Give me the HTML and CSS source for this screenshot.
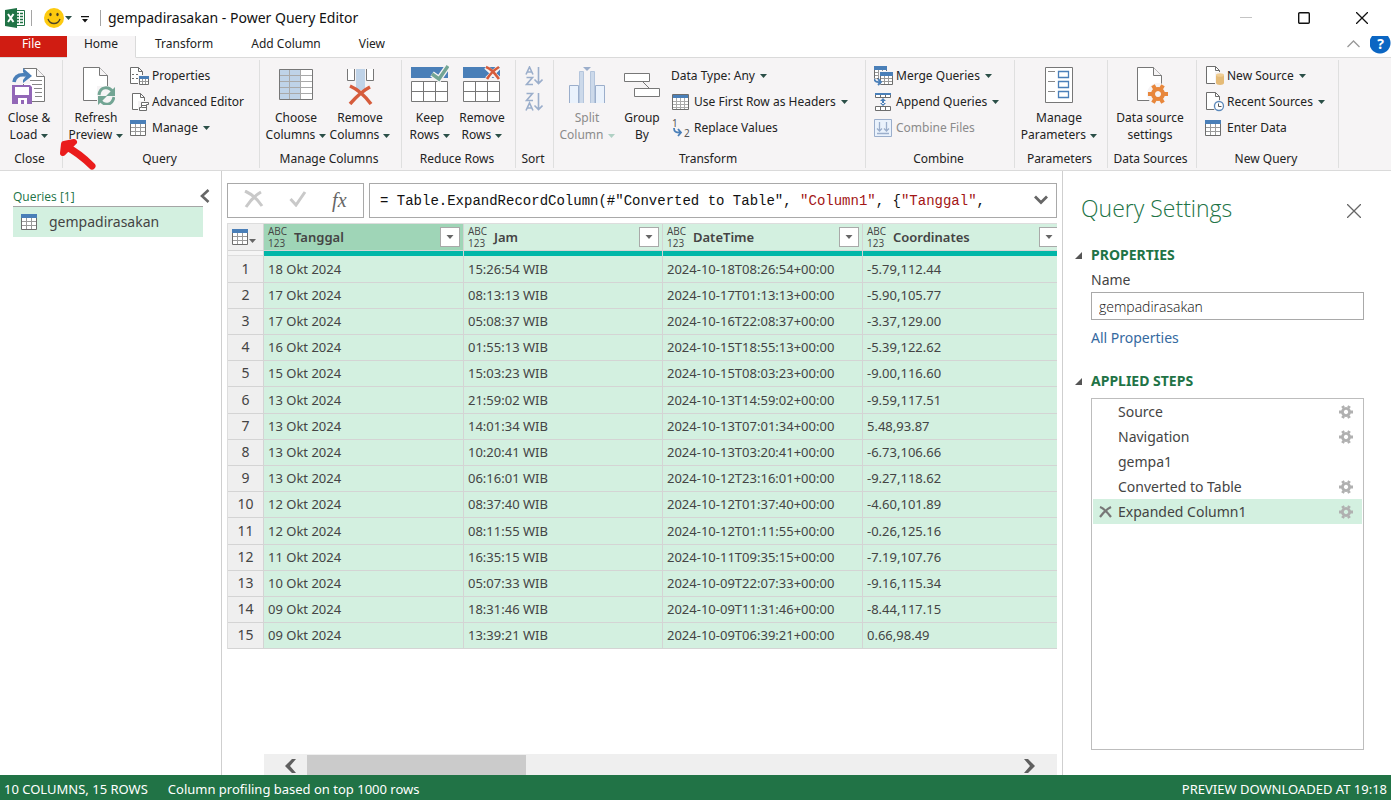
FILE: index.html
```
<!DOCTYPE html>
<html lang="en">
<head>
<meta charset="utf-8">
<title>gempadirasakan - Power Query Editor</title>
<link rel="stylesheet" href="styles.css">
</head>
<body>
<svg class="defs" aria-hidden="true">
  <symbol id="table" viewBox="0 0 16 16"><path fill="#fff" stroke="#6d6d6d" d="M.5 2.500h15v13H.5z"/><path fill="none" stroke="#9a9a9a" d="M1 7.500h14M1 11.500h14M5.500 4v11M10.500 4v11"/><path fill="#4a7fb8" d="M0 0h16v4H0z"/></symbol>
  <symbol id="gear" viewBox="0 0 20 20"><path fill="none" stroke="currentColor" stroke-width="4" d="M10 5a5 5 0 1 0 .01 0z"/><path stroke="currentColor" stroke-width="4" d="M0 10h4M16 10h4M5 1.300l2 3.500M15 1.300l-2 3.500M5 18.700l2-3.500M15 18.700l-2-3.500"/></symbol>
  <symbol id="step-gear" viewBox="0 0 14 14"><path fill="none" stroke="currentColor" stroke-width="2.800" d="M7 3.400a3.600 3.600 0 1 0 .01 0z"/><path stroke="currentColor" stroke-width="3" d="M0 7h3M11 7h3M3.500 1l1.200 2M10.500 1L9.300 3M3.500 13l1.200-2M10.500 13l-1.200-2"/></symbol>
  <symbol id="caret" viewBox="0 0 7 4"><path fill="currentColor" d="M0 0h7L3.500 4z"/></symbol>
</svg>

<div class="app">
  <header class="titlebar">
    <svg class="logo" width="20" height="20" viewBox="0 0 20 20"><path fill="#fff" stroke="#217346" d="M9 2.500h10.500v15H9z"/><path stroke="#217346" stroke-width="1.300" d="M11 5.500h3M15 5.500h3M11 8.500h3M15 8.500h3M11 11.500h3M15 11.500h3M11 14.500h3M15 14.500h3"/><path fill="#217346" d="M0 2l12-2v20L0 18z"/><path stroke="#fff" stroke-width="2" d="M3 6l5.500 8M8.500 6L3 14"/></svg>
    <span class="sep"></span>
    <button class="smile" aria-label="Send feedback"><svg width="20" height="20" viewBox="0 0 20 20"><circle cx="10" cy="10" r="10" fill="#fdca0f"/><ellipse cx="6.500" cy="6.500" rx="1.200" ry="1.700" fill="#4c4326"/><ellipse cx="13.500" cy="6.500" rx="1.200" ry="1.700" fill="#4c4326"/><path d="M4 11c2 6 10 6 12 0" fill="none" stroke="#4c4326" stroke-width="1.300"/></svg><svg class="caret"><use href="#caret"/></svg></button>
    <button class="customize" aria-label="Customize toolbar"><svg width="8" height="7" viewBox="0 0 8 7"><path fill="#111" d="M0 0h8v1.200H0zM1 3h6L4 6.500z"/></svg></button>
    <span class="sep"></span>
    <h1>gempadirasakan - Power Query Editor</h1>
    <div class="window-controls">
      <button aria-label="Minimize"><svg width="12" height="12"><path stroke="#c4c4c4" d="M0 5.500h12"/></svg></button>
      <button aria-label="Maximize"><svg width="12" height="12"><rect x=".7" y=".7" width="10.600" height="10.600" rx="1" fill="none" stroke="#111" stroke-width="1.400"/></svg></button>
      <button aria-label="Close"><svg width="12" height="12"><path stroke="#111" stroke-width="1.300" d="M0 0l12 12M12 0L0 12"/></svg></button>
    </div>
  </header>

  <nav class="tabs">
    <button class="tab file">File</button>
    <button class="tab home">Home</button>
    <button class="tab">Transform</button>
    <button class="tab">Add Column</button>
    <button class="tab">View</button>
    <span class="tab-fill"></span>
    <button class="collapse" aria-label="Collapse ribbon"><svg width="13" height="8"><path fill="none" stroke="#999" stroke-width="1.300" d="M.5 7l6-6 6 6"/></svg></button>
    <button class="help" aria-label="Help">?</button>
  </nav>

  <div class="ribbon">
    <section class="group g-close">
      <div class="body">
        <button class="big"><svg width="38" height="40" viewBox="0 0 38 40"><path fill="#fff" stroke="#777" d="M13.500 3.500h13l8 8v25h-21z"/><path fill="#f6f4f5" stroke="#777" d="M26.500 3.500v8h8"/><path stroke="#888" d="M20 15.500h12M22 19.500h10M24 23.500h8M25 27.500h7M25 31.500h7"/><path fill="#f6f4f5" d="M2 7h18v12H2z"/><path fill="none" stroke="#4a7fb8" stroke-width="3.600" d="M4 17c1-6 5-8 12-7"/><path fill="#4a7fb8" d="M13 3l9 8-9 7v-3l3-4-3-4z"/><path fill="#9267b7" d="M2 20h18l2 2v17H2z"/><path fill="#fff" d="M5 22h14v8H5zM8 33h9v6H8z"/><path fill="#9267b7" d="M11 35h3v4h-3z"/></svg><span>Close &amp;<br>Load <svg class="caret"><use href="#caret"/></svg></span></button>
      </div>
      <h2>Close</h2>
    </section>

    <section class="group g-query">
      <div class="body">
        <button class="big w60"><svg width="38" height="40" viewBox="0 0 38 40"><path fill="#fff" stroke="#777" d="M6.500 2.500h16l8 8v25h-24z"/><path fill="#f6f4f5" stroke="#777" d="M22.500 2.500v8h8"/><path fill="#f6f4f5" d="M20 21h18v19H20z"/><path fill="none" stroke="#73a594" stroke-width="3" d="M22 30c1-9 10-9 14-3M37 32c-2 9-10 9-14 3"/><path fill="#73a594" d="M38 22v9h-9zM21 40v-9h9z"/></svg><span>Refresh<br>Preview <svg class="caret"><use href="#caret"/></svg></span></button>
        <div class="rows">
          <button class="small"><svg class="ic" viewBox="0 0 20 20"><path fill="#fff" stroke="#6d6d6d" d="M.5 1.500h8l4 4v12H.5z"/><path fill="none" stroke="#6d6d6d" d="M8.500 1.500v4h4M2 8.500h2M6 8.500h2M2 12.500h2M6 12.500h2"/><path fill="#f6f4f5" d="M8 9h12v11H8z"/><path fill="#fff" stroke="#6d6d6d" d="M9.500 10.500h9v8h-9z"/><path stroke="#999" d="M10 15.500h8M12.500 13v5M15.500 13v5"/><path fill="#4a7fb8" d="M9 10h10v3H9z"/></svg>Properties</button>
          <button class="small"><svg class="ic" viewBox="0 0 20 20"><path fill="#fff" stroke="#6d6d6d" d="M2.500 1.500h8l4 4v12h-12z"/><path fill="none" stroke="#6d6d6d" d="M10.500 1.500v4h4"/><path fill="#f6f4f5" d="M8 9h12v11H8z"/><path fill="#fff" stroke="#6d6d6d" d="M11.500 10.500h7v2h-2v6h-7v-3h2zM12 13.500h4M12 15.500h4"/></svg>Advanced Editor</button>
          <button class="small"><svg class="ic t"><use href="#table"/></svg>Manage <svg class="caret"><use href="#caret"/></svg></button>
        </div>
      </div>
      <h2>Query</h2>
    </section>

    <section class="group g-columns">
      <div class="body">
        <button class="big w64"><svg width="38" height="40" viewBox="0 0 38 40"><path fill="#fff" d="M2 4h33v30H2z"/><path fill="#bfd3e8" d="M2 4h22v30H2z"/><path fill="none" stroke="#a9a9a9" d="M2 10.500h33M2 16.500h33M2 22.500h33M2 28.500h33M12.500 4v30M23.500 4v30"/><path fill="none" stroke="#777" d="M2.500 4.500h33v30h-33z"/></svg><span>Choose<br>Columns <svg class="caret"><use href="#caret"/></svg></span></button>
        <button class="big w64"><svg width="38" height="40" viewBox="0 0 38 40"><path fill="#bfd3e8" d="M15 4h9v21h-9z"/><path fill="#fff" d="M7 4h6v11H7zM26 4h7v11h-7z"/><path fill="none" stroke="#777" d="M6.500 4v11.500h7V4M25.500 4v11.500h7V4"/><path fill="none" stroke="#d65c3c" stroke-width="3.500" d="M9 21c7 3 15 10 21 18M29 22c-8 4-14 10-20 17"/></svg><span>Remove<br>Columns <svg class="caret"><use href="#caret"/></svg></span></button>
      </div>
      <h2>Manage Columns</h2>
    </section>

    <section class="group g-reduce">
      <div class="body">
        <button class="big w52"><svg width="38" height="40" viewBox="0 0 38 40"><path fill="#4a7fb8" d="M0 2h37v11H0z"/><path fill="#fff" stroke="#777" d="M.5 16.500h36v20H.5z"/><path stroke="#777" d="M0 26.500h37M12.500 17v19M24.500 17v19"/><path fill="none" stroke="#f6f4f5" stroke-width="6" d="M21 9l7 5 9-13"/><path fill="none" stroke="#73a594" stroke-width="3.400" d="M21 9l7 5 9-13"/></svg><span>Keep<br>Rows <svg class="caret"><use href="#caret"/></svg></span></button>
        <button class="big w52"><svg width="38" height="40" viewBox="0 0 38 40"><path fill="#4a7fb8" d="M0 2h37v11H0z"/><path fill="#fff" stroke="#777" d="M.5 16.500h36v20H.5z"/><path stroke="#777" d="M0 26.500h37M12.500 17v19M24.500 17v19"/><path fill="none" stroke="#f6f4f5" stroke-width="5" d="M23 2l13 12M36 2L24 14"/><path fill="none" stroke="#d65c3c" stroke-width="2.600" d="M23 2c6 2 10 8 13 12M36 2c-5 3-9 7-12 12"/></svg><span>Remove<br>Rows <svg class="caret"><use href="#caret"/></svg></span></button>
      </div>
      <h2>Reduce Rows</h2>
    </section>

    <section class="group g-sort">
      <div class="body rows">
        <button class="sort" aria-label="Sort ascending"><svg width="18" height="20" viewBox="0 0 18 20"><g fill="none" stroke="#9baecb" stroke-width="1.600"><path d="M1 8.500L4.500 1 8 8.500M2 6h5M1.500 11.500h6l-6 7h6.500M13.500 1v16M9.500 13.500l4 4 4-4"/></g></svg></button>
        <button class="sort" aria-label="Sort descending"><svg width="18" height="20" viewBox="0 0 18 20"><g fill="none" stroke="#9baecb" stroke-width="1.600"><path d="M1.500 1.500h6l-6 7h6.500M1 18.500L4.500 11 8 18.500M2 16h5M13.500 1v16M9.500 13.500l4 4 4-4"/></g></svg></button>
      </div>
      <h2>Sort</h2>
    </section>

    <section class="group g-transform">
      <div class="body">
        <button class="big w60" disabled><svg width="38" height="40" viewBox="0 0 38 40"><path fill="#eaf2fc" stroke="#9baecb" d="M1.500 38V20.500h9V38M27.500 38V20.500h9V38"/><path fill="#ccd9ea" stroke="#b4c5dc" d="M11.500 38V6.500h4V38M22.500 38V6.500h4V38"/><path fill="#9baecb" d="M15 2h8l-4 4z"/></svg><span>Split<br>Column <svg class="caret"><use href="#caret"/></svg></span></button>
        <button class="big w50"><svg width="38" height="40" viewBox="0 0 38 40"><path fill="#fff" stroke="#777" d="M1.500 8.500h25v8h-25zM11.500 23.500h25v8h-25z"/><path stroke="#777" d="M20 17l6 6"/></svg><span>Group<br>By</span></button>
        <div class="rows">
          <button class="small">Data Type: Any <svg class="caret"><use href="#caret"/></svg></button>
          <button class="small"><svg class="ic t" viewBox="0 0 17 16"><path fill="#fff" stroke="#6d6d6d" d="M.5.5h16v15H.5z"/><path fill="#4a7fb8" d="M1 1h15v3H1z"/><path stroke="#aaa" d="M1 7.500h15M1 10.500h15M1 13.500h15M4.500 4v11M8.500 4v11M12.500 4v11"/></svg>Use First Row as Headers <svg class="caret"><use href="#caret"/></svg></button>
          <button class="small"><svg class="ic wide" viewBox="0 0 20 20"><text class="num" x="0" y="9">1</text><text class="num" x="12" y="19">2</text><path fill="none" stroke="#4a7fb8" stroke-width="1.800" d="M2 10c0 4 2 4.500 6 4.500M6 11l3 3.500-3 3.500"/></svg>Replace Values</button>
        </div>
      </div>
      <h2>Transform</h2>
    </section>

    <section class="group g-combine">
      <div class="body rows">
        <button class="small"><svg class="ic" viewBox="0 0 20 20"><path fill="#fff" stroke="#6d6d6d" d="M.5.5h12v12H.5z"/><path stroke="#999" d="M1 6.500h12M1 9.500h12M4.500 4v8M8.500 4v8"/><path fill="#4a7fb8" d="M0 0h13v4H0z"/><path fill="#f6f4f5" d="M5 5h14v14H5z"/><path fill="#fff" stroke="#6d6d6d" d="M6.500 7.500h12v11h-12z"/><path stroke="#999" d="M7 12.500h11M7 15.500h11M10.500 10v8M14.500 10v8"/><path fill="#4a7fb8" d="M6 6h13v4H6z"/><path fill="none" stroke="#f6f4f5" stroke-width="5" d="M0 13c1 3 3 3.500 6 3"/><path fill="none" stroke="#4a7fb8" stroke-width="1.800" d="M0 13c1 3 3 3.500 6 3M4 13l3 3-3 3"/></svg>Merge Queries <svg class="caret"><use href="#caret"/></svg></button>
        <button class="small"><svg class="ic" viewBox="0 0 20 20"><path fill="#fff" stroke="#6d6d6d" d="M1.500 1.500h15v4h-15zM1.500 14.500h15v4h-15zM6.500 3v2M11.500 3v2M6.500 15v3M11.500 15v3"/><path fill="#4a7fb8" d="M1 1h16v2H1zM9 6l3 3H6zM9 14l3-3H6zM8 8h2v4H8z"/></svg>Append Queries <svg class="caret"><use href="#caret"/></svg></button>
        <button class="small" disabled><svg class="ic" viewBox="0 0 20 20"><path fill="#eaf2fc" stroke="#9baecb" d="M.5 1.500h17v17H.5z"/><path fill="none" stroke="#9baecb" stroke-width="1.300" d="M5.500 4v9M3 10.500l2.500 2.500L8 10.500M12.500 4v9M10 10.500l2.500 2.500 2.500-2.500M3 15.500h12"/></svg>Combine Files</button>
      </div>
      <h2>Combine</h2>
    </section>

    <section class="group g-params">
      <div class="body">
        <button class="big"><svg width="38" height="40" viewBox="0 0 38 40"><path fill="#fff" stroke="#777" d="M5.500 2.500h27v35h-27z"/><path fill="none" stroke="#4a7fb8" stroke-width="1.300" d="M18.500 6.500h10v6h-10zM18.500 16.500h10v6h-10zM18.500 26.500h10v6h-10z"/><path stroke="#888" d="M8 6.500h7M8 16.500h7M8 26.500h7"/></svg><span>Manage<br>Parameters <svg class="caret"><use href="#caret"/></svg></span></button>
      </div>
      <h2>Parameters</h2>
    </section>

    <section class="group g-sources">
      <div class="body">
        <button class="big"><svg width="38" height="40" viewBox="0 0 38 40"><path fill="#fff" stroke="#777" d="M6.500 2.500h16l8 8v25h-24z"/><path fill="#f6f4f5" stroke="#777" d="M22.500 2.500v8h8"/><circle cx="27" cy="29" r="11" fill="#f6f4f5"/><svg class="orange" x="17" y="19" width="20" height="20"><use href="#gear"/></svg></svg><span>Data source<br>settings</span></button>
      </div>
      <h2>Data Sources</h2>
    </section>

    <section class="group g-new">
      <div class="body rows">
        <button class="small"><svg class="ic" viewBox="0 0 20 20"><path fill="#fff" stroke="#6d6d6d" d="M1.500.5h9l4 4v13h-13z"/><path fill="none" stroke="#6d6d6d" d="M10.500.5v4h4"/><path fill="#f6f4f5" d="M10 6h10v13H10z"/><path fill="#e5bb77" d="M11 9v8c0 2.500 8 2.500 8 0V9z"/><ellipse cx="15" cy="9" rx="4" ry="1.800" fill="#efcd94"/></svg>New Source <svg class="caret"><use href="#caret"/></svg></button>
        <button class="small"><svg class="ic" viewBox="0 0 20 20"><path fill="#fff" stroke="#6d6d6d" d="M1.500.5h9l4 4v13h-13z"/><path fill="none" stroke="#6d6d6d" d="M10.500.5v4h4"/><circle cx="14" cy="14" r="6" fill="#f6f4f5"/><circle cx="14" cy="14" r="4.500" fill="#fff" stroke="#5b88ba" stroke-width="1.300"/><path fill="none" stroke="#555" d="M13.500 11.500v3h3"/></svg>Recent Sources <svg class="caret"><use href="#caret"/></svg></button>
        <button class="small"><svg class="ic t"><use href="#table"/></svg>Enter Data</button>
      </div>
      <h2>New Query</h2>
    </section>
    <svg class="pointer" width="42" height="36" viewBox="0 0 42 36" aria-hidden="true"><path fill="none" stroke="#ea1c1c" stroke-width="7" stroke-linecap="round" stroke-linejoin="round" d="M35 29C26 20 18 14 8 9"/><path fill="#ea1c1c" stroke="#ea1c1c" stroke-width="6" stroke-linecap="round" stroke-linejoin="round" d="M17 5L7 7l-1 9z"/></svg>
  </div>

  <main class="workspace">
    <aside class="queries">
      <div class="queries-head"><h3>Queries [1]</h3><button aria-label="Collapse queries"><svg width="10" height="14"><path fill="none" stroke="#666" stroke-width="2.600" d="M8.500 1L2 7l6.500 6"/></svg></button></div>
      <button class="query-item"><svg width="16" height="16"><use href="#table"/></svg>gempadirasakan</button>
    </aside>

    <section class="preview">
      <div class="formula">
        <div class="formula-tools">
          <button aria-label="Cancel"><svg width="20" height="18"><path fill="none" stroke="#c9c9c9" stroke-width="3" d="M1 1c7 3 13 9 17 15M17 2C10 6 6 11 2 17"/></svg></button>
          <button aria-label="Apply"><svg width="18" height="16"><path fill="none" stroke="#c9c9c9" stroke-width="3" d="M1.500 8l5.500 6L16 1"/></svg></button>
          <button class="fx" aria-label="Insert step">fx</button>
        </div>
        <div class="formula-box">
          <div class="formula-text" role="textbox" contenteditable="true" spellcheck="false" aria-label="Formula">= Table.ExpandRecordColumn(#"Converted to Table", <span class="str">"Column1"</span>, {<span class="str">"Tanggal"</span>,</div>
          <button aria-label="Expand formula bar"><svg width="14" height="10"><path fill="none" stroke="#666" stroke-width="2.800" d="M1 1.500l6 6 6-6"/></svg></button>
        </div>
      </div>

      <div class="grid">
        <table>
          <colgroup><col class="c-num"><col><col class="c-time"><col><col></colgroup>
          <thead>
            <tr>
              <th><button class="corner" aria-label="Table menu"><svg width="16" height="16"><use href="#table"/></svg><svg class="caret"><use href="#caret"/></svg></button></th>
              <th class="sel"><div class="head"><span class="type"><span>ABC</span><span>123</span></span>Tanggal<button aria-label="Filter Tanggal"><svg class="caret"><use href="#caret"/></svg></button></div></th>
              <th><div class="head"><span class="type"><span>ABC</span><span>123</span></span>Jam<button aria-label="Filter Jam"><svg class="caret"><use href="#caret"/></svg></button></div></th>
              <th><div class="head"><span class="type"><span>ABC</span><span>123</span></span>DateTime<button aria-label="Filter DateTime"><svg class="caret"><use href="#caret"/></svg></button></div></th>
              <th><div class="head"><span class="type"><span>ABC</span><span>123</span></span>Coordinates<button aria-label="Filter Coordinates"><svg class="caret"><use href="#caret"/></svg></button></div></th>
            </tr>
            <tr class="quality"><td></td><td></td><td></td><td></td><td></td></tr>
          </thead>
          <tbody>
            <tr><th>1</th><td>18 Okt 2024</td><td>15:26:54 WIB</td><td>2024-10-18T08:26:54+00:00</td><td>-5.79,112.44</td></tr>
            <tr><th>2</th><td>17 Okt 2024</td><td>08:13:13 WIB</td><td>2024-10-17T01:13:13+00:00</td><td>-5.90,105.77</td></tr>
            <tr><th>3</th><td>17 Okt 2024</td><td>05:08:37 WIB</td><td>2024-10-16T22:08:37+00:00</td><td>-3.37,129.00</td></tr>
            <tr><th>4</th><td>16 Okt 2024</td><td>01:55:13 WIB</td><td>2024-10-15T18:55:13+00:00</td><td>-5.39,122.62</td></tr>
            <tr><th>5</th><td>15 Okt 2024</td><td>15:03:23 WIB</td><td>2024-10-15T08:03:23+00:00</td><td>-9.00,116.60</td></tr>
            <tr><th>6</th><td>13 Okt 2024</td><td>21:59:02 WIB</td><td>2024-10-13T14:59:02+00:00</td><td>-9.59,117.51</td></tr>
            <tr><th>7</th><td>13 Okt 2024</td><td>14:01:34 WIB</td><td>2024-10-13T07:01:34+00:00</td><td>5.48,93.87</td></tr>
            <tr><th>8</th><td>13 Okt 2024</td><td>10:20:41 WIB</td><td>2024-10-13T03:20:41+00:00</td><td>-6.73,106.66</td></tr>
            <tr><th>9</th><td>13 Okt 2024</td><td>06:16:01 WIB</td><td>2024-10-12T23:16:01+00:00</td><td>-9.27,118.62</td></tr>
            <tr><th>10</th><td>12 Okt 2024</td><td>08:37:40 WIB</td><td>2024-10-12T01:37:40+00:00</td><td>-4.60,101.89</td></tr>
            <tr><th>11</th><td>12 Okt 2024</td><td>08:11:55 WIB</td><td>2024-10-12T01:11:55+00:00</td><td>-0.26,125.16</td></tr>
            <tr><th>12</th><td>11 Okt 2024</td><td>16:35:15 WIB</td><td>2024-10-11T09:35:15+00:00</td><td>-7.19,107.76</td></tr>
            <tr><th>13</th><td>10 Okt 2024</td><td>05:07:33 WIB</td><td>2024-10-09T22:07:33+00:00</td><td>-9.16,115.34</td></tr>
            <tr><th>14</th><td>09 Okt 2024</td><td>18:31:46 WIB</td><td>2024-10-09T11:31:46+00:00</td><td>-8.44,117.15</td></tr>
            <tr><th>15</th><td>09 Okt 2024</td><td>13:39:21 WIB</td><td>2024-10-09T06:39:21+00:00</td><td>0.66,98.49</td></tr>
          </tbody>
        </table>
      </div>

      <div class="scrollbar">
        <button aria-label="Scroll left"><svg width="11" height="14"><path fill="#5f5f5f" d="M7 0h4L5 7l6 7H7L0 7z"/></svg></button>
        <div class="track"><div class="thumb"></div></div>
        <button aria-label="Scroll right"><svg width="11" height="14"><path fill="#5f5f5f" d="M4 0H0l6 7-6 7h4l7-7z"/></svg></button>
      </div>
    </section>

    <aside class="settings">
      <div class="settings-head"><h2>Query Settings</h2><button aria-label="Close settings"><svg width="14" height="14"><path stroke="#666" stroke-width="1.300" d="M0 0l14 14M14 0L0 14"/></svg></button></div>
      <div class="section">
        <h3><svg width="7" height="7"><path fill="#555" d="M7 0v7H0z"/></svg>PROPERTIES</h3>
        <label for="qname">Name</label>
        <input id="qname" type="text" value="gempadirasakan">
        <a href="#">All Properties</a>
      </div>
      <div class="section steps">
        <h3><svg width="7" height="7"><path fill="#555" d="M7 0v7H0z"/></svg>APPLIED STEPS</h3>
        <ul>
          <li><span>Source</span><button aria-label="Edit Source"><svg width="14" height="14"><use href="#step-gear"/></svg></button></li>
          <li><span>Navigation</span><button aria-label="Edit Navigation"><svg width="14" height="14"><use href="#step-gear"/></svg></button></li>
          <li><span>gempa1</span></li>
          <li><span>Converted to Table</span><button aria-label="Edit Converted to Table"><svg width="14" height="14"><use href="#step-gear"/></svg></button></li>
          <li class="current"><button class="remove" aria-label="Delete step"><svg width="13" height="12"><path fill="none" stroke="#777" stroke-width="2.200" d="M1 1c5 2 8 6 11 10M12 1C8 3 4 7 1 11"/></svg></button><span>Expanded Column1</span><button aria-label="Edit Expanded Column1"><svg width="14" height="14"><use href="#step-gear"/></svg></button></li>
        </ul>
      </div>
    </aside>
  </main>

  <footer class="status"><span>10 COLUMNS, 15 ROWS</span><span>Column profiling based on top 1000 rows</span><span class="end">PREVIEW DOWNLOADED AT 19:18</span></footer>
</div>
</body>
</html>
```

FILE: styles.css
```
* { box-sizing: border-box; }
body { margin: 0; font: 12px/16px "Noto Sans", "Open Sans", sans-serif; color: #222; background: #fff; }
h1, h2, h3, ul { margin: 0; padding: 0; font-weight: 400; font-size: inherit; }
button { margin: 0; padding: 0; border: 0; background: none; font: inherit; color: inherit; white-space: nowrap; }
svg { flex: none; }
.defs { position: absolute; width: 0; height: 0; }
.app { display: flex; flex-direction: column; min-height: 100vh; }
.caret { width: 7px; height: 4px; margin-left: 1px; color: #2b4f47; vertical-align: middle; }

.titlebar { display: flex; align-items: center; height: 36px; padding-left: 5px; }
.titlebar .sep { width: 1px; height: 16px; background: #a5a5a5; margin: 0 7px 0 6px; }
.smile { display: flex; align-items: center; margin-left: 5px; }
.customize { display: flex; margin: 2px 5px 0 9px; }
.titlebar h1 { font-size: 14px; line-height: 20px; color: #111; }
.window-controls { display: flex; margin-left: auto; }
.window-controls button { display: grid; place-items: center; width: 58px; height: 34px; }

.tabs { display: flex; height: 22px; }
.tab { padding: 0 19px 6px; border-bottom: 1px solid #dadada; }
.file { width: 67px; padding: 0 4px 6px 0; background: #d01c12; color: #fff; }
.home { width: 69px; background: #f6f4f5; border-right: 1px solid #dadada; border-bottom-color: #f6f4f5; padding-inline: 0; }
.tab-fill, .collapse, .help { border-bottom: 1px solid #dadada; }
.tab-fill { flex: 1; }
.collapse { padding-bottom: 6px; padding-right: 10px; }
.help { width: 21px; color: #fff; font-weight: 700; font-size: 14px; background: radial-gradient(circle at 10px 7px, #0b66c3 10px, transparent 11px); padding-bottom: 6px; }

.ribbon { position: relative; display: flex; height: 113px; padding: 2px 0; background: #f6f4f5; border-bottom: 1px solid #dadada; }
.group { display: flex; flex-direction: column; flex: none; border-right: 1px solid #dfdfdf; }
.group .body { display: flex; flex: 1; padding: 2px 3px 0; }
.group h2 { text-align: center; padding: 0 3px 1px 0; }
.big { flex: 1; display: flex; flex-direction: column; align-items: center; gap: 4px; padding-top: 3px; text-align: center; }
.big > span { line-height: 17px; }
.w60, .w64, .w52, .w50 { flex: none; }
.w60 { width: 60px; }
.w64 { width: 64px; }
.w52 { width: 52px; }
.w50 { width: 50px; }
.rows, .group .body.rows { display: flex; flex-direction: column; align-items: flex-start; padding-top: 1px; }
.group .body.rows { padding-top: 3px; }
.small { display: flex; align-items: center; height: 26px; gap: 2px; }
.small .caret { margin-left: 3px; }
.ic { width: 20px; height: 20px; }
.ic.t { width: 16px; height: 16px; margin-right: 4px; }
.num { font: 10px "Noto Sans", sans-serif; fill: #555; }
.orange { color: #e8873c; }
button:disabled { color: #8b8b8b; }
button:disabled .caret { color: #b0d0c4; }
.g-close { width: 63px; }
.g-close .body, .g-params .body, .g-sources .body { padding-left: 0; padding-right: 4px; }
.g-query { width: 197px; }
.g-query .rows { margin-left: 4px; }
.g-columns { width: 142px; }
.g-columns .body { padding-left: 4px; }
.g-reduce { width: 114px; }
.g-reduce .body { padding-left: 2px; }
.g-sort { width: 38px; }
.g-transform { width: 312px; }
.g-transform .rows { margin-left: 4px; }
.g-transform .ic { width: 20px; margin-left: 1px; margin-right: 0; }
.g-transform .ic.t { width: 17px; margin-right: 3px; }
.g-combine { width: 149px; }
.g-params { width: 93px; }
.g-sources { width: 89px; }
.g-new { width: 142px; }
.g-combine .rows, .g-new .rows { padding-left: 8px; }
.g-sort .rows { padding-left: 9px; }
.sort { height: 26px; }
.sort svg { display: block; }
.pointer { position: absolute; left: 57px; top: 79px; }

.workspace { display: flex; flex: 1; }
.queries { width: 222px; flex: none; border-right: 1px solid #cfcfcf; padding: 13px 18px 0 13px; }
.queries-head { display: flex; justify-content: space-between; height: 23px; border-bottom: 1px solid #a5a5a5; }
.queries-head h3 { padding-top: 5px; color: #217346; font-family: "Open Sans", sans-serif; font-weight: 400; font-size: 12px; }
.queries-head button { height: 21px; padding-top: 2px; margin-right: -7px; }
.queries-head button svg { display: block; }
.query-item { display: flex; align-items: center; width: 100%; height: 30px; padding-left: 8px; gap: 12px; background: #d3f0e0; font-size: 14px; color: #444; }

.preview { flex: 1; min-width: 0; display: flex; flex-direction: column; padding: 12px 5px 0; }
.formula { display: flex; gap: 5px; height: 35px; }
.formula-tools, .formula-box { display: flex; align-items: center; border: 1px solid #a9a9a9; }
.formula-tools { width: 137px; justify-content: space-around; padding: 0 4px; }
.fx { font: italic 20px "Liberation Serif", serif; color: #666; }
.formula-box { flex: 1; min-width: 0; padding: 0 8px 0 10px; justify-content: space-between; }
.formula-text { font: 14px/20px "Liberation Mono", monospace; color: #111; white-space: nowrap; overflow: hidden; outline: 0; }
.str { color: #a31515; }

.grid { overflow: hidden; margin-top: 5px; }
table { table-layout: fixed; width: 835px; border-collapse: separate; border-spacing: 0; border-left: 1px solid #ddd; border-top: 1px solid #ddd; color: #444; }
col { width: 200px; }
.c-time { width: 199px; }
.c-num { width: 36px; }
td, th { height: 26px; padding: 0 4px 1px; border-right: 1px solid #d4d4d4; border-bottom: 1px solid #d4d4d4; text-align: left; font-size: 13px; background: #d3f0e0; line-height: 18px; }
thead th { height: 27px; padding: 0 3px 0 4px; font-weight: 600; }
thead th.sel { background: #9fd5b7; }
th:first-child, td:first-child { background: #efefef; text-align: center; font-weight: 400; font-size: 14px; }
tbody tr:nth-child(5n+1) > * { height: 27px; }
.quality td { height: 5px; padding: 0; background: #00b7a8; border-bottom: 0; }
.quality td:first-child { background: #f5f5f5; border-bottom: 1px solid #ddd; }
.corner { display: flex; align-items: center; gap: 1px; }
.corner .caret { margin: 8px 0 0; color: #666; }
.head { display: flex; align-items: center; height: 26px; }
.type { display: flex; flex-direction: column; width: 26px; font: 10px/12px "Open Sans", sans-serif; }
.head button { display: grid; place-items: center; width: 20px; height: 20px; margin-left: auto; border: 1px solid #a9a9a9; background: #fff; }
.head .caret { margin: 0; width: 8px; color: #666; }

.scrollbar { display: flex; align-items: center; height: 21px; margin: auto 0 0 37px; background: #efefef; }
.scrollbar button { width: 43px; height: 21px; padding: 3px 10px 0 21px; }
.scrollbar button:last-child { padding: 3px 22px 0 10px; }
.scrollbar button svg { display: block; }
.track { flex: 1; }
.thumb { width: 31%; height: 20px; background: #cbcbcb; }

.settings { width: 329px; flex: none; display: flex; flex-direction: column; border-left: 1px solid #cfcfcf; padding: 20px 27px 25px 18px; color: #444; font-size: 14px; line-height: 20px; }
.settings-head { display: flex; align-items: center; justify-content: space-between; }
.settings-head h2 { font: 300 23px/34px "Open Sans", sans-serif; color: #217346; }
.settings-head button { margin: 5px 3px 0 0; }
.settings-head button svg { display: block; }
.section { display: flex; flex-direction: column; align-items: flex-start; padding-left: 10px; margin-top: 20px; }
.section h3 { display: flex; align-items: center; gap: 9px; margin-left: -16px; font-weight: 700; color: #217346; font-size: 14px; }
.section label { margin-top: 5px; }
.section input { width: 100%; height: 28px; margin: 2px 0 8px; border: 1px solid #a9a9a9; padding: 0 7px; font: 300 14px "Open Sans", sans-serif; color: #111; }
.section a { color: #35699f; text-decoration: none; }
.steps { flex: 1; margin-top: 23px; }
.steps ul { flex: 1; width: 100%; margin-top: 7px; border: 1px solid #bdbdbd; padding: 0 1px; list-style: none; }
.steps li { display: flex; align-items: center; height: 25px; padding: 0 9px 0 25px; }
.steps li button { margin-left: auto; color: #b0b0b0; }
.steps li svg { display: block; }
.steps .current { background: #d3f0e0; padding-left: 6px; }
.steps li .remove { margin: 0 6px 0 0; }

.status { display: flex; align-items: center; height: 25px; padding: 2px 4px 0; gap: 20px; background: #217346; color: #fff; font-size: 13px; }
.status .end { margin-left: auto; }
```
